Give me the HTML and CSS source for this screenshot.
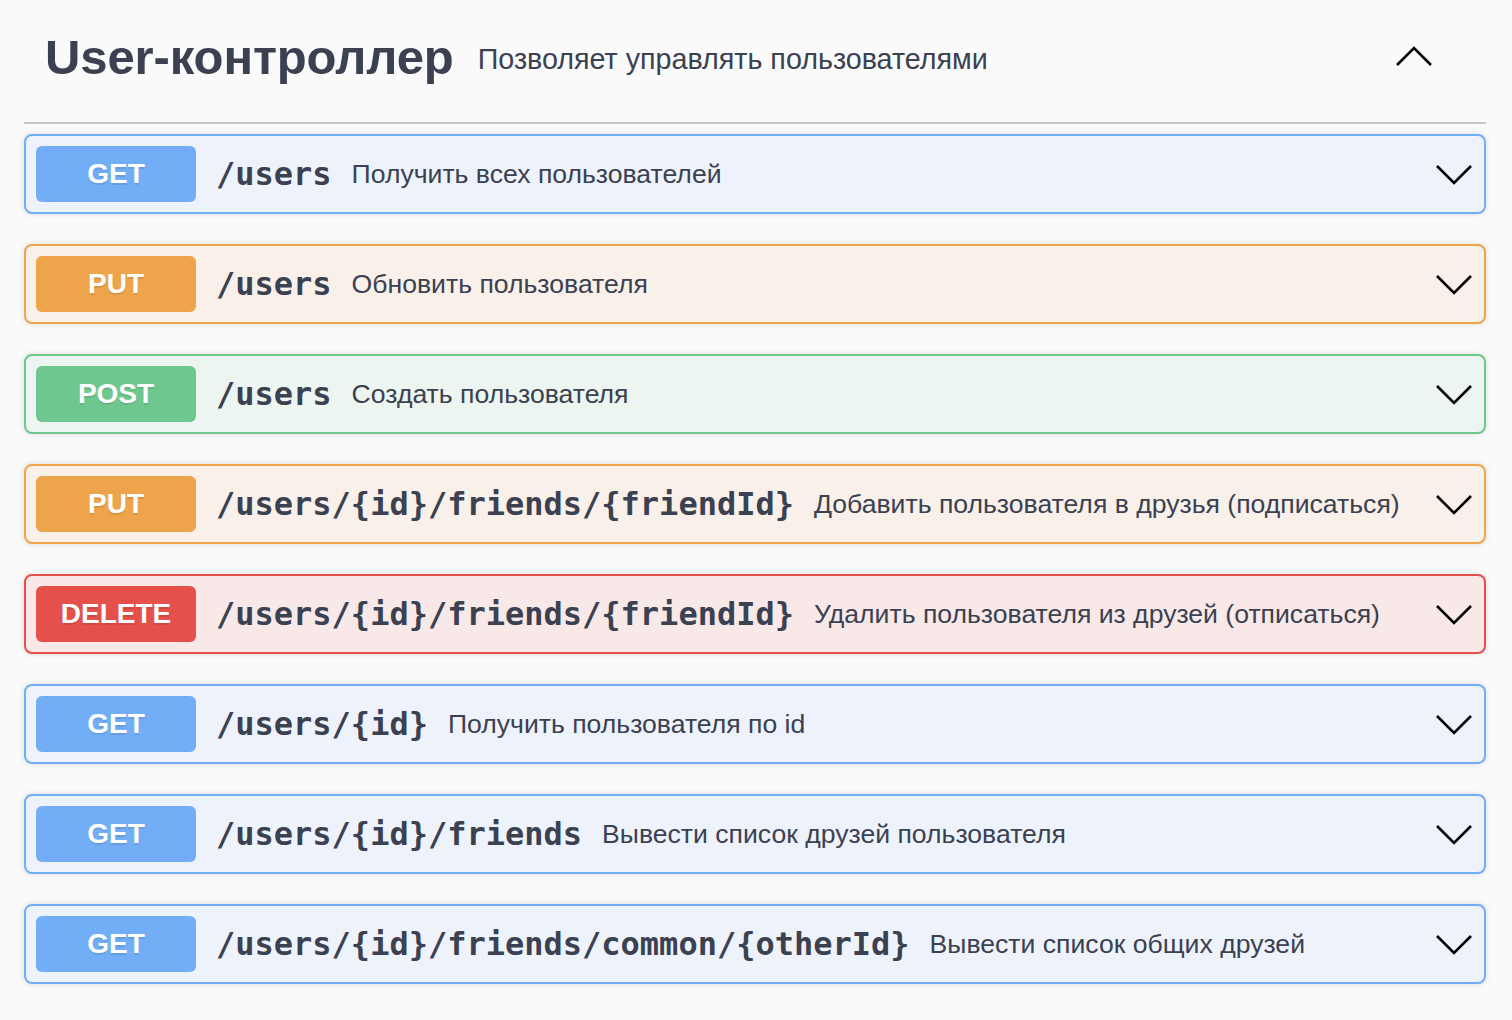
FILE: index.html
```html
<!DOCTYPE html>
<html lang="ru">
<head>
<meta charset="utf-8">
<title>User-контроллер</title>
<link rel="stylesheet" href="styles.css">
</head>
<body>
<div class="tag-section">
  <div class="tag-header">
    <h3 class="tag-title">User-контроллер</h3>
    <span class="tag-desc">Позволяет управлять пользователями</span>
    <button class="tag-toggle" aria-label="Свернуть">
      <svg width="40" height="40" viewBox="0 0 40 40"><polyline points="3,28 20,11 37,28" fill="none" stroke="#000" stroke-width="2.6"/></svg>
    </button>
  </div>

  <div class="opblocks">
    <div class="opblock get">
      <span class="method">GET</span>
      <span class="path">/users</span>
      <span class="summary">Получить всех пользователей</span>
      <svg class="arrow" width="40" height="40" viewBox="0 0 40 40"><polyline points="3,11 20,28 37,11" fill="none" stroke="#000" stroke-width="2.6"/></svg>
    </div>
    <div class="opblock put">
      <span class="method">PUT</span>
      <span class="path">/users</span>
      <span class="summary">Обновить пользователя</span>
      <svg class="arrow" width="40" height="40" viewBox="0 0 40 40"><polyline points="3,11 20,28 37,11" fill="none" stroke="#000" stroke-width="2.6"/></svg>
    </div>
    <div class="opblock post">
      <span class="method">POST</span>
      <span class="path">/users</span>
      <span class="summary">Создать пользователя</span>
      <svg class="arrow" width="40" height="40" viewBox="0 0 40 40"><polyline points="3,11 20,28 37,11" fill="none" stroke="#000" stroke-width="2.6"/></svg>
    </div>
    <div class="opblock put">
      <span class="method">PUT</span>
      <span class="path">/users/{id}/friends/{friendId}</span>
      <span class="summary">Добавить пользователя в друзья (подписаться)</span>
      <svg class="arrow" width="40" height="40" viewBox="0 0 40 40"><polyline points="3,11 20,28 37,11" fill="none" stroke="#000" stroke-width="2.6"/></svg>
    </div>
    <div class="opblock delete">
      <span class="method">DELETE</span>
      <span class="path">/users/{id}/friends/{friendId}</span>
      <span class="summary">Удалить пользователя из друзей (отписаться)</span>
      <svg class="arrow" width="40" height="40" viewBox="0 0 40 40"><polyline points="3,11 20,28 37,11" fill="none" stroke="#000" stroke-width="2.6"/></svg>
    </div>
    <div class="opblock get">
      <span class="method">GET</span>
      <span class="path">/users/{id}</span>
      <span class="summary">Получить пользователя по id</span>
      <svg class="arrow" width="40" height="40" viewBox="0 0 40 40"><polyline points="3,11 20,28 37,11" fill="none" stroke="#000" stroke-width="2.6"/></svg>
    </div>
    <div class="opblock get">
      <span class="method">GET</span>
      <span class="path">/users/{id}/friends</span>
      <span class="summary">Вывести список друзей пользователя</span>
      <svg class="arrow" width="40" height="40" viewBox="0 0 40 40"><polyline points="3,11 20,28 37,11" fill="none" stroke="#000" stroke-width="2.6"/></svg>
    </div>
    <div class="opblock get">
      <span class="method">GET</span>
      <span class="path">/users/{id}/friends/common/{otherId}</span>
      <span class="summary">Вывести список общих друзей</span>
      <svg class="arrow" width="40" height="40" viewBox="0 0 40 40"><polyline points="3,11 20,28 37,11" fill="none" stroke="#000" stroke-width="2.6"/></svg>
    </div>
  </div>
</div>
</body>
</html>
```
FILE: styles.css
```css
* { box-sizing: border-box; }
html, body {
  margin: 0;
  padding: 0;
  background: #fafafa;
  font-family: "Liberation Sans", Arial, sans-serif;
  color: #3b4151;
}
.tag-section {
  width: 1462px;
  margin-left: 24px;
}
.tag-header {
  display: flex;
  align-items: center;
  height: 124px;
  padding: 0 0 8px 21px;
  border-bottom: 2px solid #c6c6c8;
}
.tag-title {
  margin: 0;
  font-size: 49px;
  font-weight: 700;
  color: #3b4151;
  letter-spacing: -0.1px;
}
.tag-desc {
  margin-left: 24px;
  font-size: 28.7px;
  color: #3b4151;
  flex: 1;
  padding-top: 4px;
}
.tag-toggle {
  background: none;
  border: 0;
  padding: 0;
  margin-right: 52px;
  width: 40px;
  height: 40px;
  display: flex;
}
.opblocks {
  padding-top: 10px;
}
.opblock {
  display: flex;
  align-items: center;
  height: 80px;
  margin-bottom: 30px;
  padding: 0 10px 0 10px;
  border: 2px solid;
  border-radius: 8px;
  box-shadow: 0 0 6px rgba(0,0,0,0.12);
}
.method {
  flex: none;
  width: 160px;
  height: 56px;
  border-radius: 6px;
  display: flex;
  align-items: center;
  justify-content: center;
  color: #fff;
  font-size: 28px;
  font-weight: 700;
  text-shadow: 0 2px 0 rgba(0,0,0,0.1);
}
.path {
  padding: 0 20px;
  font-family: "DejaVu Sans Mono", "Liberation Mono", monospace;
  font-weight: 700;
  font-size: 32px;
  color: #3b4151;
  white-space: nowrap;
}
.summary {
  flex: 1;
  font-size: 26.6px;
  color: #3b4151;
}
.arrow { flex: none; margin-top: 2px; }

.get { background: #eef3fb; border-color: #72aef6; }
.get .method { background: #72aef6; }
.put { background: #f9f0ea; border-color: #eea44b; }
.put .method { background: #eea44b; }
.post { background: #ecf5ef; border-color: #6fc790; }
.post .method { background: #6fc790; }
.delete { background: #f8e8e8; border-color: #e5504b; }
.delete .method { background: #e5504b; }
```
